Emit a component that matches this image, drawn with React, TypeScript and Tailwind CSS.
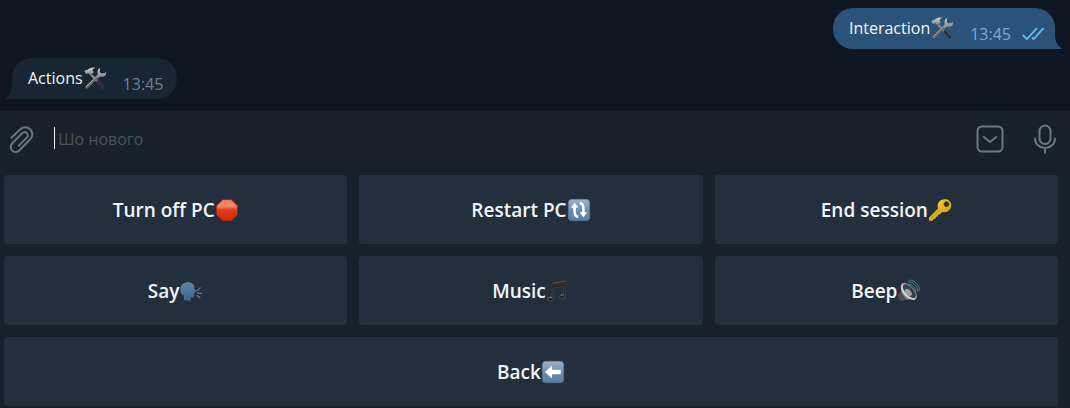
import type { ReactNode } from "react";

const emoji = "h-6 w-6 shrink-0";

function Tools() {
  return (
    <svg viewBox="0 0 24 24" className="h-6 w-6 shrink-0" role="img" aria-label="tools">
      <defs>
        <linearGradient id="metal" x1="0" y1="0" x2="0" y2="1">
          <stop offset="0" stopColor="#d4d6d8" />
          <stop offset="1" stopColor="#777c82" />
        </linearGradient>
      </defs>
      <path d="M9.3 8.2 21 20.2c.5.6.3 1.4-.3 1.9-.7.5-1.5.5-2-.1L7.6 9.8z" fill="#85898e" />
      <path d="m14.8 14 6.2 6.2c.5.6.3 1.4-.3 1.9-.7.5-1.5.5-2-.1l-5.7-6.3z" fill="#33282b" />
      <path d="M2.6 20.2 14.2 9.1l1.9 1.8L4.9 22.3c-.7.6-1.6.5-2.3-.1-.6-.6-.5-1.5 0-2z" fill="#6d6266" />
      <path d="m3.2 20.7 10-9.7" stroke="#b4b4b8" strokeWidth=".9" />
      <path d="M1.3 5.3 3.2 3.7l1 .5C6.2 2 9.3 1 12.3 1.9c-2 .5-3 1.3-2.7 2.7l1.2 1.7-3.3 3.1-2-2.1-1.3.1-1 .9z" fill="url(#metal)" />
      <path d="m17 2-.3 4 1.7 1.6 3.7-.7.3-1.7c1 2.2.5 4.4-1.5 5.3-1.3.6-2.7.3-3.7-.1l-2.6 2.4-2-2 2.3-2.7C14 5.5 14.7 3 17 2z" fill="url(#metal)" />
    </svg>
  );
}

function StopSign() {
  return (
    <svg viewBox="0 0 24 24" className={emoji} role="img" aria-label="stop">
      <defs>
        <linearGradient id="stop" x1="0" y1="0" x2="0" y2="1">
          <stop offset="0" stopColor="#f0795c" />
          <stop offset=".3" stopColor="#f08a72" />
          <stop offset=".5" stopColor="#e03a18" />
          <stop offset="1" stopColor="#d52a08" />
        </linearGradient>
      </defs>
      <path d="M7.500 1.200h9l6.300 6.300v9l-6.300 6.300h-9l-6.300-6.300v-9z" fill="#c92705" />
      <path d="M7.900 2h8.200L22 7.900v8.200L16.100 22H7.900L2 16.100V7.900z" fill="url(#stop)" />
    </svg>
  );
}

function Tile({ id, label, children }: { id: string; label: string; children: ReactNode }) {
  return (
    <svg viewBox="0 0 24 24" className={emoji} role="img" aria-label={label}>
      <defs>
        <linearGradient id={id} x1="0" y1="0" x2="0" y2="1">
          <stop offset="0" stopColor="#9cb3cc" />
          <stop offset=".5" stopColor="#6f8eb0" />
          <stop offset="1" stopColor="#587da5" />
        </linearGradient>
      </defs>
      <rect x="1.3" y="1.3" width="21.4" height="21.4" rx="3.5" fill={`url(#${id})`} stroke="#547ba4" strokeWidth=".6" />
      {children}
    </svg>
  );
}

function Restart() {
  return (
    <Tile id="restart-tile" label="restart">
      <path d="M11.2 19C8.800 18.600 7.600 16.500 7.600 13.500V9M12.800 5c2.400.4 3.600 2.500 3.600 5.500V15" fill="none" stroke="#fff" strokeWidth="2.600" />
      <path d="M3.900 9.800 7.600 4.500l3.700 5.300zM12.700 14.200l3.700 5.300 3.700-5.300z" fill="#fff" />
    </Tile>
  );
}

function BackArrow() {
  return (
    <Tile id="back-tile" label="left arrow">
      <path d="m4 12 7-6.500v4.300h8.700v4.400H11v4.300z" fill="#fff" />
    </Tile>
  );
}

function Key() {
  return (
    <svg viewBox="0 0 24 24" className={emoji} role="img" aria-label="key">
      <defs>
        <linearGradient id="gold" x1="0" y1="0" x2="1" y2="1">
          <stop offset="0" stopColor="#ffdd44" />
          <stop offset=".6" stopColor="#e3ae1b" />
          <stop offset="1" stopColor="#b88509" />
        </linearGradient>
      </defs>
      <path fillRule="evenodd" d="M11.300 3.600C13.900.900 18.400.500 21.200 2.800s2.700 6.600.2 9.300c-1.900 2.100-4.900 2.700-7.200 1.900l-2.200 2.200-2 .3-.2 2-2 .2-.3 2-2 .1-.7 1.500-1.700.6-2-.3-.3-2.500 9.200-9.600c-.8-2.400-.3-5.100 1.300-6.900zM16.900 4.300a2.500 2.500 0 1 0 3.500 3.500 2.500 2.500 0 0 0-3.500-3.500z" fill="url(#gold)" />
      <path d="m2.500 21 9.200-9.200" stroke="#9c7614" strokeWidth=".8" />
      <circle cx="18.600" cy="6" r="2.700" fill="none" stroke="#735f26" strokeWidth=".6" />
    </svg>
  );
}

function Speaking() {
  return (
    <svg viewBox="0 0 24 24" className={emoji} role="img" aria-label="speaking head">
      <defs>
        <linearGradient id="head" x1="0" y1="0" x2="0" y2="1">
          <stop offset="0" stopColor="#5b82aa" />
          <stop offset="1" stopColor="#3e6690" />
        </linearGradient>
      </defs>
      <path d="M5 21.500v-4.400C2.600 15.600 1.200 13.200 1.300 10.300 1.400 5.500 4.800 3.200 9 3.200c4.100 0 6.300 2.300 6.300 5.300 0 1.100.9 2.200 1.700 3.400.3.600 0 1-.7 1.100l-.7.2.1 1-.8.600.5.600-.2 1c-.1 1.700-1.200 2.300-2.500 2.200l-1-.1v3z" fill="url(#head)" />
      <path d="m18 11.700 3.200-2.800M18.400 14.200l4.500.1M18 16.500l2.900 2" stroke="#5e80a3" strokeWidth="1.200" strokeLinecap="round" />
    </svg>
  );
}

function Notes() {
  return (
    <svg viewBox="0 0 24 24" className={emoji} role="img" aria-label="music notes">
      <path d="M6.3 4.200 19.200 2v15.300h-1.300V7L7.600 8.800v11.300H6.300z" fill="#17191d" stroke="#555960" strokeWidth=".45" />
      <path d="M6.300 4.200 19.200 2v4.500L6.300 8.700z" fill="#302626" />
      <path d="M6.600 4.500 19 2.300" stroke="#66676b" strokeWidth=".6" />
      <g fill="#202227" stroke="#61656b" strokeWidth=".5">
        <ellipse cx="4.600" cy="20" rx="3" ry="2.200" transform="rotate(-18 4.600 20)" />
        <ellipse cx="16.300" cy="17.500" rx="3" ry="2.200" transform="rotate(-18 16.300 17.500)" />
      </g>
      <path d="M2.700 19.300q1.200-1.300 3.200-.8M14.500 16.700q1.200-1.200 3-.7" stroke="#a3a7ac" strokeWidth=".7" fill="none" />
    </svg>
  );
}

function Speaker() {
  return (
    <svg viewBox="0 0 24 24" className={emoji} role="img" aria-label="speaker">
      <defs>
        <linearGradient id="cone" x1="0" y1="0" x2="1" y2="0">
          <stop offset="0" stopColor="#e2e2e2" />
          <stop offset="1" stopColor="#8b8e92" />
        </linearGradient>
      </defs>
      <path d="M1 16.300c.2-2.500 2.500-3 4.300-3.500l4.300 6.800c-1.800 2.500-4.200 3.300-6.300 1.700C1.700 20.100.9 18.200 1 16.300z" fill="#4b4e52" />
      <path d="M4.200 13 4.500 5.500l14 14.500-9.200.5z" fill="#85888b" />
      <ellipse cx="11.800" cy="12.500" rx="5.400" ry="10.400" transform="rotate(-43 11.800 12.500)" fill="url(#cone)" />
      <ellipse cx="12.400" cy="12.200" rx="4" ry="8.600" transform="rotate(-43 12.400 12.200)" fill="#3c4044" />
      <ellipse cx="11.300" cy="13.400" rx="2.600" ry="4.200" transform="rotate(-43 11.300 13.400)" fill="#a0a3a5" />
      <path d="M11.500 5.500c3.300-.5 7.500 3.700 7.300 7.800M11 3c4.800-.8 10.200 4.600 9.800 10M12.500 1.200c5-.3 10.400 5 10 10.600" fill="none" stroke="#4c8392" strokeWidth="1" />
    </svg>
  );
}

function Bubble({ text, outgoing = false }: { text: string; outgoing?: boolean }) {
  const tone = outgoing ? "bg-[#2b5278]" : "bg-[#182533]";
  return (
    <div className={`relative flex h-[41px] rounded-[20px] pl-4 text-base leading-6 ${tone} ${outgoing ? "rounded-br-none pr-[11px]" : "rounded-bl-none pr-[14px]"}`}>
      <p className="flex items-center pb-px text-[#f2f5f8]">
        <span>{text}</span>
        <Tools />
      </p>
      <time className={`ml-4 self-end pb-[3px] ${outgoing ? "text-[#7da8d3]" : "text-[#6d7f8f]"}`}>13:45</time>
      {outgoing && (
        <svg viewBox="0 0 22 14" className="mb-2 ml-[11px] h-[14px] w-[22px] self-end" fill="none" stroke="#65b9f4" strokeWidth="1.8" strokeLinecap="round" strokeLinejoin="round" role="img" aria-label="Read">
          <path d="m1.200 8.300 3.600 3.900L14.500 1.700M10.500 11l1.200 1.200 9.300-10.500" />
        </svg>
      )}
      <svg
        viewBox="0 0 7 14"
        className={`absolute bottom-0 h-[14px] w-[7px] ${outgoing ? "left-full text-[#2b5278]" : "right-full -scale-x-100 text-[#182533]"}`}
        fill="currentColor"
        aria-hidden="true"
      >
        <path d="M0 0c0 6 2.200 10.500 6.500 13 .8.500.5 1-.2 1H0z" />
      </svg>
    </div>
  );
}

const actions: { label: string; icon: ReactNode }[] = [
  { label: "Turn off PC", icon: <StopSign /> },
  { label: "Restart PC", icon: <Restart /> },
  { label: "End session", icon: <Key /> },
  { label: "Say", icon: <Speaking /> },
  { label: "Music", icon: <Notes /> },
  { label: "Beep", icon: <Speaker /> },
  { label: "Back", icon: <BackArrow /> },
];

export default function App() {
  return (
    <main className="bg-[#17212b] font-['Open_Sans','Noto_Sans',sans-serif]">
      <section className="flex flex-col gap-[9px] bg-[#0e1621] pt-2 pb-[11px]">
        <div className="flex justify-end pr-[15px]">
          <Bubble text="Interaction" outgoing />
        </div>
        <div className="flex pl-3">
          <Bubble text="Actions" />
        </div>
      </section>

      <form className="flex h-[65px] items-center border-t border-[#111a23] pr-[13px] pb-2 pl-[9px] text-[#6a7883]" onSubmit={(e) => e.preventDefault()}>
        <button type="button" aria-label="Attach file" className="shrink-0">
          <svg viewBox="0 0 26 28" className="h-7 w-[26px]" fill="none" stroke="currentColor" strokeWidth="2" strokeLinecap="round">
            <path d="M2.500 12.700 10.700 4.700c3.200-3.100 7.600-3.100 10.400-.5 3 2.900 3 7.200.1 10.100l-10.700 11c-2.200 2.200-5.300 2.100-7.300.2-2.100-2.100-2-5.200.1-7.300l9.800-9.900c1.500-1.500 3.500-1.400 4.700-.2 1.300 1.300 1.200 3.200-.1 4.500l-7.800 8" />
          </svg>
        </button>
        <div className="ml-[19px] flex min-w-0 flex-1 items-center">
          <span className="mb-[3px] h-[22px] w-px bg-[#f0f2f4]" aria-hidden="true" />
          <input
            type="text"
            aria-label="Message"
            placeholder="Шо нового"
            className="w-full bg-transparent pl-[3px] text-base leading-6 text-[#f2f5f8] outline-none placeholder:text-[#47535e]"
          />
        </div>
        <button type="button" aria-label="Hide bot keyboard" className="shrink-0">
          <svg viewBox="0 0 28 28" className="h-7 w-7" fill="none" stroke="currentColor" strokeWidth="2" strokeLinecap="round" strokeLinejoin="round">
            <rect x="1.500" y="1.500" width="25" height="25" rx="4.500" />
            <path d="m7.800 12 6.200 5 6.200-5" />
          </svg>
        </button>
        <button type="button" aria-label="Record voice message" className="ml-[29px] shrink-0">
          <svg viewBox="0 0 24 30" className="h-[30px] w-6" fill="none" stroke="currentColor" strokeWidth="2" strokeLinecap="round">
            <rect x="6.500" y="1.500" width="11" height="18.500" rx="5.500" />
            <path d="M2 14.500c.1 5.600 4.300 9.500 10 9.500s9.900-3.900 10-9.500M12 24v4.800" />
          </svg>
        </button>
      </form>

      <section aria-label="Bot keyboard" className="grid grid-cols-3 gap-3 pr-3 pb-0.5 pl-1">
        {actions.map(({ label, icon }) => (
          <button
            key={label}
            type="button"
            className="flex h-[69px] items-center justify-center rounded bg-[#242f3d] text-[19px] leading-7 font-semibold text-[#f2f5f8] last:col-span-3"
          >
            <span>{label}</span>
            {icon}
          </button>
        ))}
      </section>
    </main>
  );
}
